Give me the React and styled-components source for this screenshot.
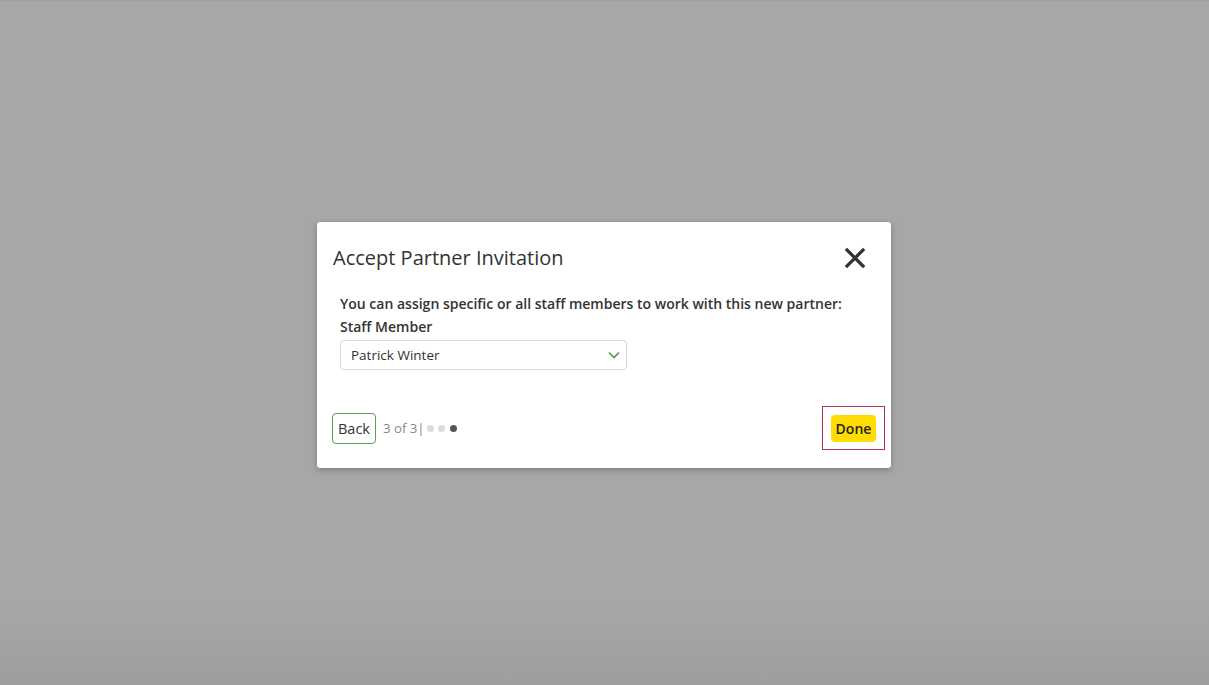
import React from "react";
import styled, { createGlobalStyle } from "styled-components";

const Global = createGlobalStyle`
  html, body {
    margin: 0;
    padding: 0;
    height: 100%;
  }
  body {
    font-family: "Open Sans", "Liberation Sans", sans-serif;
    color: #333;
  }
`;

const App = () => {
  return (
    <>
      <Global />
      <Overlay>
        <Modal>
          <Header>
            <Title>Accept Partner Invitation</Title>
            <CloseButton aria-label='close'>
              <svg width='22' height='22' viewBox='0 0 22 22'>
                <path
                  d='M3 3 L19 19 M19 3 L3 19'
                  stroke='#333'
                  strokeWidth='3.2'
                  strokeLinecap='square'
                />
              </svg>
            </CloseButton>
          </Header>
          <Body>
            <Lead>
              You can assign specific or all staff members to work with this
              new partner:
            </Lead>
            <Label>Staff Member</Label>
            <Select>
              <span>Patrick Winter</span>
              <svg width='12' height='8' viewBox='0 0 12 8'>
                <path
                  d='M1 1.5 L6 6.5 L11 1.5'
                  fill='none'
                  stroke='#4a9a3a'
                  strokeWidth='1.6'
                />
              </svg>
            </Select>
          </Body>
          <Footer>
            <Steps>
              <BackButton>Back</BackButton>
              <Counter>3 of 3|</Counter>
              <Dots>
                <Dot />
                <Dot />
                <Dot active />
              </Dots>
            </Steps>
            <FocusRing>
              <DoneButton>Done</DoneButton>
            </FocusRing>
          </Footer>
        </Modal>
      </Overlay>
    </>
  );
};

export default App;

const Overlay = styled.div`
  width: 100%;
  height: 100vh;
  box-sizing: border-box;
  padding: 5px 1px 0 0;
  display: flex;
  align-items: center;
  justify-content: center;
  background: linear-gradient(
    to bottom,
    #9d9d9d 0px,
    #a7a7a7 2px,
    #a7a7a7 88%,
    #9e9e9e 100%
  );
`;

const Modal = styled.div`
  width: 574px;
  height: 246px;
  box-sizing: border-box;
  padding: 16px 16px 18px 15px;
  background: #fff;
  border-radius: 3px;
  box-shadow: 0 2px 6px rgba(0, 0, 0, 0.25);
  display: flex;
  flex-direction: column;
`;

const Header = styled.div`
  height: 40px;
  padding-left: 1px;
  display: flex;
  align-items: center;
  justify-content: space-between;
`;

const Title = styled.h2`
  margin: -1px 0 0 0;
  font-size: 20px;
  font-weight: 400;
  color: #333;
`;

const CloseButton = styled.button`
  border: none;
  background: none;
  padding: 0;
  margin-right: 9px;
  display: flex;
  align-items: center;
  cursor: pointer;
`;

const Body = styled.div`
  margin: 14px 0 0 8px;
  display: flex;
  flex-direction: column;
`;

const Lead = styled.p`
  margin: 0;
  font-size: 14px;
  font-weight: 600;
  line-height: 23px;
  color: #333;
`;

const Label = styled.label`
  font-size: 14px;
  font-weight: 600;
  line-height: 23px;
  color: #333;
`;

const Select = styled.div`
  margin-top: 2px;
  width: 287px;
  height: 30px;
  box-sizing: border-box;
  border: 1px solid #dadada;
  border-radius: 4px;
  padding: 0 6px 0 10px;
  display: flex;
  align-items: center;
  justify-content: space-between;
  font-size: 13.5px;
  color: #333;
`;

const Footer = styled.div`
  margin-top: auto;
  display: flex;
  align-items: center;
  justify-content: space-between;
`;

const Steps = styled.div`
  display: flex;
  align-items: center;
`;

const BackButton = styled.button`
  height: 31px;
  padding: 0 5px;
  background: #fff;
  border: 1.5px solid #5a9e52;
  border-radius: 4px;
  font-family: inherit;
  font-size: 14.5px;
  color: #333;
  cursor: pointer;
`;

const Counter = styled.span`
  margin-left: 7px;
  font-size: 13.2px;
  color: #888;
`;

const Dots = styled.div`
  display: flex;
  gap: 4.5px;
  margin-left: 2px;
`;

const Dot = styled.span`
  width: 7px;
  height: 7px;
  border-radius: 50%;
  background: ${(p) => (p.active ? "#555" : "#dcdcdc")};
`;

const FocusRing = styled.div`
  width: 63px;
  height: 44px;
  box-sizing: border-box;
  margin-right: -10px;
  border: 1.5px solid #a4336c;
  display: flex;
  align-items: center;
  justify-content: center;
`;

const DoneButton = styled.button`
  height: 27px;
  padding: 0 5px;
  border: none;
  border-radius: 4px;
  background: #ffdd00;
  font-family: inherit;
  font-size: 14px;
  font-weight: 600;
  color: #222;
  cursor: pointer;
`;
